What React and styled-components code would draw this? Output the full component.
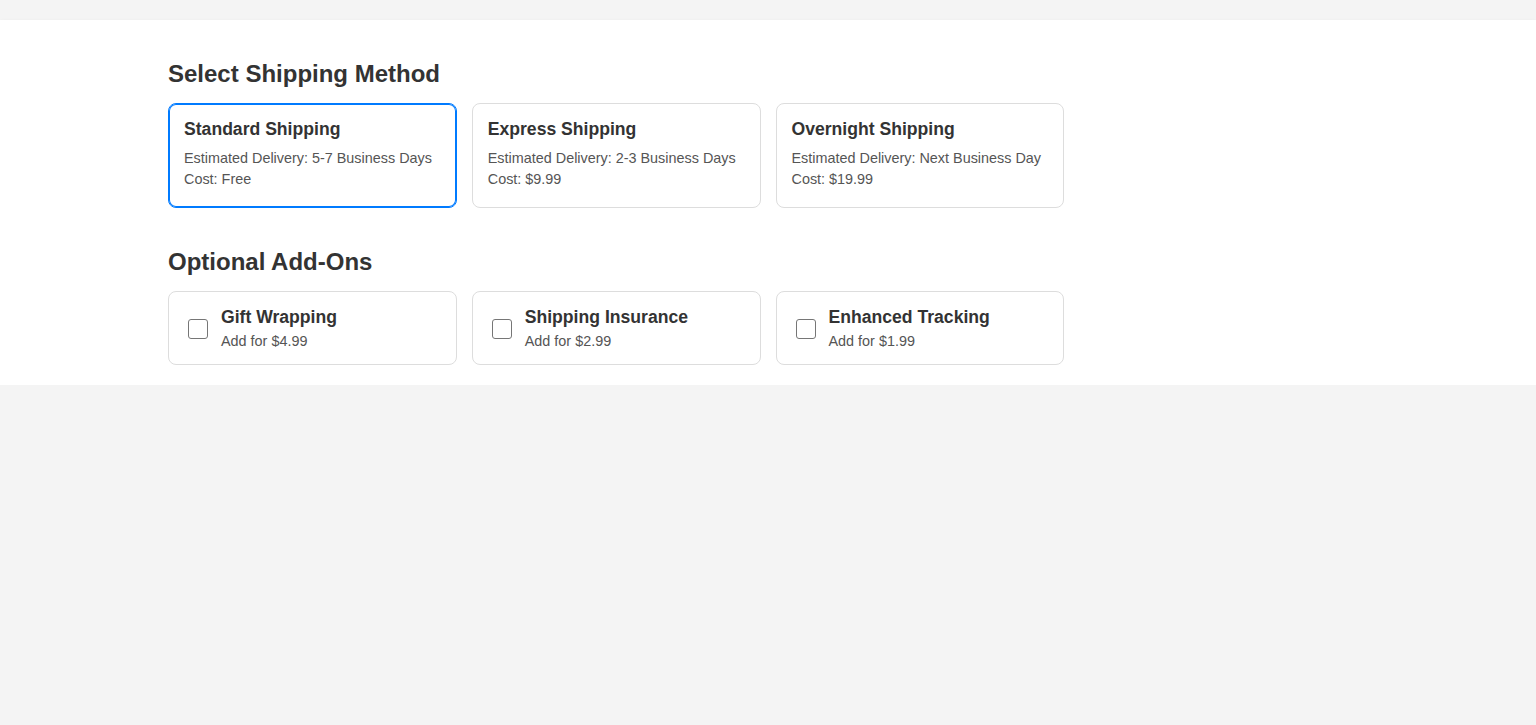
import React, { useState } from "react";
import styled, { createGlobalStyle } from "styled-components";

const GlobalStyle = createGlobalStyle`
  body {
    margin: 0;
    background: #f4f4f4;
    font-family: "Liberation Sans", Arial, sans-serif;
    color: #333;
  }
`;

const Panel = styled.section`
  margin-top: 20px;
  background: #fff;
  box-shadow: 0 2px 4px rgba(0, 0, 0, 0.1);
  padding: 20px 0;
`;

const Container = styled.div`
  max-width: 1200px;
  margin: 0 auto;
`;

const Heading = styled.h2`
  font-size: 24px;
  font-weight: bold;
  color: #333;
  margin: 20px 0 15px;
`;

const Grid = styled.div`
  display: grid;
  grid-template-columns: repeat(4, 1fr);
  gap: 15px;
  margin-bottom: ${(p) => p.$spacing || 0}px;
`;

const MethodCard = styled.div`
  border: 1px solid ${(p) => (p.$selected ? "#007bff" : "#ddd")};
  box-shadow: ${(p) => (p.$selected ? "0 0 0 1px #007bff inset" : "none")};
  border-radius: 8px;
  padding: 14px 15px 17px;
  cursor: pointer;
`;

const CardTitle = styled.div`
  font-size: 17.6px;
  font-weight: bold;
  color: #333;
  line-height: 22px;
  margin-bottom: ${(p) => p.$gap ?? 8}px;
`;

const Detail = styled.div`
  font-size: 14.4px;
  line-height: 21px;
  color: #555;
`;

const AddonCard = styled.label`
  display: flex;
  align-items: center;
  border: 1px solid #ddd;
  border-radius: 8px;
  padding: 14px 19px 12px;
  cursor: pointer;
`;

const Box = styled.span`
  width: 18px;
  height: 18px;
  border: 1px solid #767676;
  border-radius: 3px;
  margin-right: 13px;
  flex-shrink: 0;
  background: ${(p) => (p.$checked ? "#007bff" : "#fff")};
`;

const AddonText = styled.div`
  display: flex;
  flex-direction: column;
`;

const methods = [
  { name: "Standard Shipping", delivery: "5-7 Business Days", cost: "Free" },
  { name: "Express Shipping", delivery: "2-3 Business Days", cost: "$9.99" },
  { name: "Overnight Shipping", delivery: "Next Business Day", cost: "$19.99" },
];

const addons = [
  { name: "Gift Wrapping", price: "$4.99" },
  { name: "Shipping Insurance", price: "$2.99" },
  { name: "Enhanced Tracking", price: "$1.99" },
];

export default function App() {
  const [selected, setSelected] = useState(0);
  const [checked, setChecked] = useState({});

  return (
    <>
      <GlobalStyle />
      <Panel>
        <Container>
          <Heading>Select Shipping Method</Heading>
          <Grid $spacing={40}>
            {methods.map((m, i) => (
              <MethodCard
                key={m.name}
                $selected={selected === i}
                onClick={() => setSelected(i)}
              >
                <CardTitle>{m.name}</CardTitle>
                <Detail>Estimated Delivery: {m.delivery}</Detail>
                <Detail>Cost: {m.cost}</Detail>
              </MethodCard>
            ))}
          </Grid>
          <Heading>Optional Add-Ons</Heading>
          <Grid>
            {addons.map((a, i) => (
              <AddonCard
                key={a.name}
                onClick={() => setChecked({ ...checked, [i]: !checked[i] })}
              >
                <Box $checked={!!checked[i]} />
                <AddonText>
                  <CardTitle $gap={3}>{a.name}</CardTitle>
                  <Detail>Add for {a.price}</Detail>
                </AddonText>
              </AddonCard>
            ))}
          </Grid>
        </Container>
      </Panel>
    </>
  );
}
